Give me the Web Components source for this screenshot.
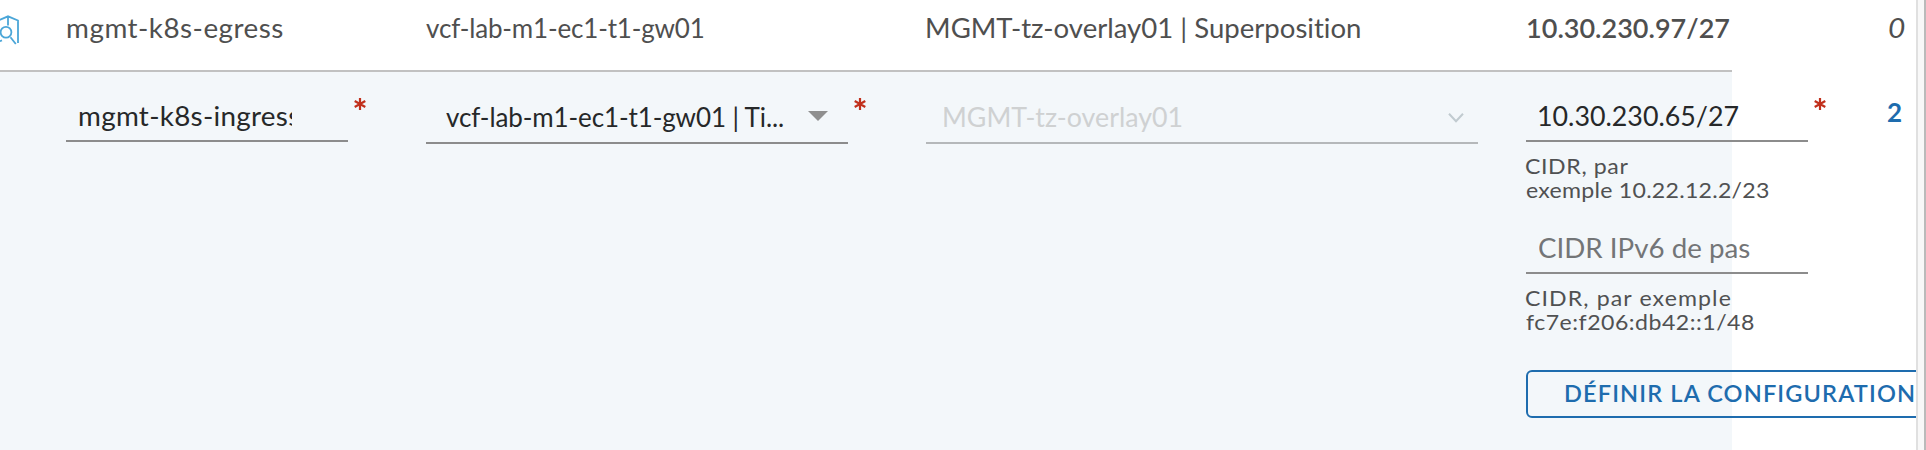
<!DOCTYPE html>
<html lang="fr">
<head>
<meta charset="utf-8">
<title>Segments</title>
<style>
html, body { margin: 0; height: 450px; overflow: hidden; background: #fff; }
body { font-family: Lato, "Open Sans", sans-serif; font-size: 26px; color: #4f4f4f; font-variant-ligatures: none; }
</style>
</head>
<body>
<segment-page></segment-page>
<script>
const define = (name, html, ready) => {
  const template = document.createElement('template');
  template.innerHTML = html;
  customElements.define(name, class extends HTMLElement {
    constructor() {
      super();
      this.attachShadow({ mode: 'open' }).append(template.content.cloneNode(true));
    }
    connectedCallback() { if (ready) ready(this); }
  });
};

// One line of text, widened and tracked so that its ink spans the "ink" attribute in pixels.
const pen = document.createElement('canvas').getContext('2d');
define('track-text', `<style>:host{display:block;white-space:pre;transform-origin:0 50%}</style><slot></slot>`, el => {
  const s = getComputedStyle(el), text = el.textContent;
  pen.font = `${s.fontStyle} ${s.fontWeight} ${s.fontSize} ${s.fontFamily}`;
  pen.letterSpacing = '0.01px';
  const m = pen.measureText(text);
  const ink = m.actualBoundingBoxLeft + m.actualBoundingBoxRight;
  const target = Number(el.getAttribute('ink'));
  const stretch = Math.max(1, Math.min(1.07, target / ink));
  if (stretch > 1) el.style.transform = `scaleX(${stretch})`;
  if (text.length > 1) el.style.letterSpacing = (target / stretch - ink) / (text.length - 1) + 'px';
  el.style.marginLeft = m.actualBoundingBoxLeft * stretch + 'px';
});

define('segment-icon', `<style>:host{display:block;width:20px;height:30px}svg{display:block}</style>
<svg width="20" height="30" viewBox="0 0 20 30" fill="none" stroke="#4ba6d8" stroke-width="1.8">
<path d="M-2 5.5 8 1.3 18 5.5V28M8 1.3V10.5M10.5 22.3 15.8 29M-2 26.8 2 25.4"/><circle cx="6" cy="17.2" r="5.4"/></svg>`);

define('required-mark', `<style>:host{display:block;width:12px;height:12px}svg{display:block}</style>
<svg width="12" height="12" viewBox="0 0 12 12" stroke="#c1301c" stroke-width="2.2"><path d="M6 0V12M.7 3 11.3 9M11.3 3 .7 9"/></svg>`);

define('line-field', `<style>
:host{display:flex;box-sizing:border-box;width:282px;height:44px;padding:0 56px 0 13px;border-bottom:2px solid #8c8c8c;color:#262829;line-height:36px}
:host([select]){width:422px;height:46px;padding:0 20px 0 20px;line-height:38px;justify-content:space-between}
:host([disabled]){width:552px;height:46px;padding:0 14px 0 18px;line-height:38px;justify-content:space-between;border-color:#b5b8ba;color:#cfd1d2}
:host([placeholder]){color:#737577}
.value{flex:1;min-width:0;overflow:hidden}
</style><div class="value"><slot></slot></div><slot name="arrow"></slot>`);

define('field-row', `<style>:host{display:flex;gap:6px;align-items:flex-start}</style><slot></slot>`);

define('help-text', `<style>:host{display:block;font-size:21.6px;line-height:24px;color:#505152}</style><slot></slot>`);

define('outline-button', `<style>
:host{display:block;box-sizing:border-box;width:460px;height:48px;padding-left:37px;border:2px solid #1e6cae;border-radius:6px;color:#1e6cae;font-size:22px;font-weight:600;line-height:44px}
</style><slot></slot>`);

define('grid-row', `<style>
:host{display:grid;grid-template-columns:66px 360px 500px 600px 361px 100px;box-sizing:border-box;width:1732px;height:72px;border-bottom:2px solid #c1c1c1;line-height:36px}
:host([editing]){height:378px;border:0;background:#f3f7fa}
</style><slot></slot>`);

define('scroll-edge', `<style>:host{display:block;box-sizing:border-box;width:10px;height:450px;background:#f8f8f8;border-left:2px solid #e0e0e0;border-right:2px solid #bababa}</style>`);

define('segment-page', `<style>
:host{display:flex;width:1926px;height:450px;overflow:hidden}
main{width:1916px;height:450px;overflow:hidden}
.cell{padding-top:10px;min-width:0}
.icon{padding-top:15px}
.strong{font-weight:600}
.edit{padding-top:26px}
.edit required-mark{flex:none}
.caret{width:20px;height:10px;margin-top:13px;flex:none}
.chev{width:16px;height:10px;margin-top:15px;flex:none}
.zero{width:20px;padding-left:1px;font-style:italic}
.zero span{display:block;transform:scale(1.15,1.05);transform-origin:0 50%}
.count{padding-top:22px;color:#1e6cae;font-weight:700}
</style>
<main>
<grid-row>
 <div class="icon"><segment-icon></segment-icon></div>
 <div class="cell"><track-text ink="216" style="padding-left:1px">mgmt-k8s-egress</track-text></div>
 <div class="cell"><track-text ink="278">vcf-lab-m1-ec1-t1-gw01</track-text></div>
 <div class="cell"><track-text ink="433" style="padding-left:1px">MGMT-tz-overlay01 | Superposition</track-text></div>
 <div class="cell strong"><track-text ink="203" style="padding-left:1px">10.30.230.97/27</track-text></div>
 <div class="cell zero"><span>0</span></div>
</grid-row>
<grid-row editing>
 <div></div>
 <div class="edit"><field-row><line-field><track-text ink="221">mgmt-k8s-ingress</track-text></line-field><required-mark></required-mark></field-row></div>
 <div class="edit"><field-row><line-field select><track-text ink="338">vcf-lab-m1-ec1-t1-gw01 | Ti...</track-text><svg slot="arrow" class="caret" viewBox="0 0 20 10"><path d="M0 0H20L10 10Z" fill="#8f8f8f"/></svg></line-field><required-mark></required-mark></field-row></div>
 <div class="edit"><line-field disabled><track-text ink="238">MGMT-tz-overlay01</track-text><svg slot="arrow" class="chev" viewBox="0 0 16 10" fill="none" stroke="#c1cbd0" stroke-width="2"><path d="M1 .8 8 8.3 15 .8"/></svg></line-field></div>
 <div class="edit">
  <field-row><line-field><track-text ink="200">10.30.230.65/27</track-text></line-field><required-mark></required-mark></field-row>
  <help-text style="margin-top:12px"><track-text ink="102">CIDR, par</track-text><track-text ink="243">exemple 10.22.12.2/23</track-text></help-text>
  <line-field placeholder style="margin-top:28px"><track-text ink="211">CIDR IPv6 de pas</track-text></line-field>
  <help-text style="margin-top:12px"><track-text ink="205">CIDR, par exemple</track-text><track-text ink="228">fc7e:f206:db42::1/48</track-text></help-text>
  <outline-button style="margin-top:36px"><track-text ink="349">DÉFINIR LA CONFIGURATION</track-text></outline-button>
 </div>
 <div class="count"><track-text>2</track-text></div>
</grid-row>
</main>
<scroll-edge></scroll-edge>`);
</script>
</body>
</html>
